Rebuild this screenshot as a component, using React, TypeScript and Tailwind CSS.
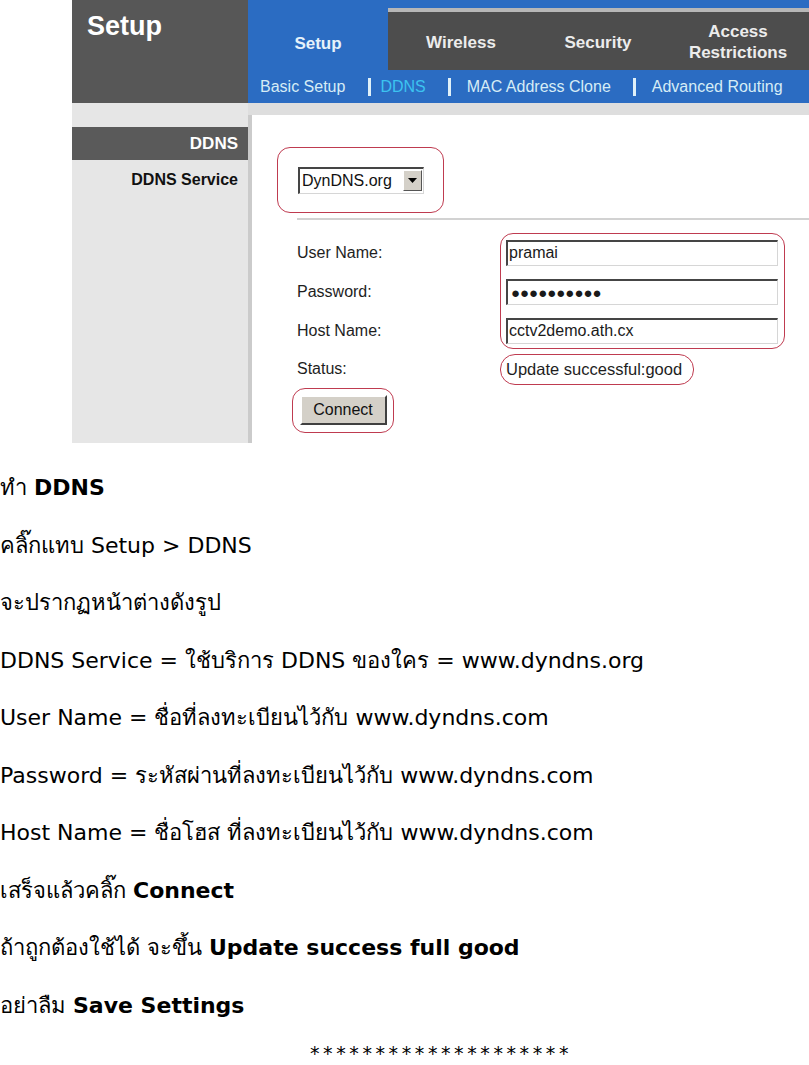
const arial = { fontFamily: '"Liberation Sans", Arial, sans-serif' };

function Outline({ className, children }: { className: string; children: React.ReactNode }) {
  return <div className={`border-[1.5px] border-[#bf3b50] ${className}`}>{children}</div>;
}

function Field({ value, dots }: { value: string; dots?: boolean }) {
  return (
    <div className="flex h-[26px] w-[272px] items-center border-t-2 border-l-2 border-t-[#454545] border-l-[#454545] border-b border-r border-b-[#d6d6d6] border-r-[#d6d6d6] bg-white pl-[1px] text-[16px] leading-none text-[#1a1a1a]">
      {dots ? <span className="pl-[2px] text-[15px]">{value}</span> : value}
    </div>
  );
}

function RouterShot() {
  return (
    <div className="ml-[72px] h-[443px] w-[737px] overflow-hidden" style={arial}>
      <div className="flex h-[103px]">
        <div className="w-[176px] bg-[#575757] pl-[15px] pt-[13px] text-[27px] font-bold leading-none text-white">Setup</div>
        <div className="flex flex-1 flex-col bg-[#2b6cc2]">
          <div className="flex h-[70px]">
            <div className="flex w-[140px] items-center justify-center pt-[18px] text-[17px] font-bold text-[#e6f2fa]">Setup</div>
            <div className="flex-1 pt-[8px]">
              <div className="flex h-full border-t-4 border-[#b7b7b7] bg-[#4d4d4d] pt-[2px] text-[17px] font-bold leading-[21px] text-[#ececec]">
                <div className="flex w-[140px] items-center justify-center pl-[6px]">Wireless</div>
                <div className="flex w-[140px] items-center justify-center">Security</div>
                <div className="flex w-[140px] items-center justify-center text-center">
                  Access
                  <br />
                  Restrictions
                </div>
              </div>
            </div>
          </div>
          <div className="flex h-[33px] items-center pl-[12px] text-[16px] text-[#d6ecf6]">
            <span>Basic Setup</span>
            <span className="ml-[23px] inline-block h-[18px] w-[3px] bg-[#dff0f8]" />
            <span className="ml-[9px] text-[#3cc3f0]">DDNS</span>
            <span className="ml-[22px] inline-block h-[18px] w-[3px] bg-[#dff0f8]" />
            <span className="ml-[16px]">MAC Address Clone</span>
            <span className="ml-[22px] inline-block h-[18px] w-[3px] bg-[#dff0f8]" />
            <span className="ml-[16px]">Advanced Routing</span>
          </div>
        </div>
      </div>

      <div className="flex h-[340px]">
        <div className="w-[176px] bg-[#e6e6e6] pt-[24px]">
          <div className="flex h-[33px] items-center justify-end bg-[#5a5a5a] pr-[10px] text-[17px] font-bold text-white">DDNS</div>
          <div className="mt-[10px] pr-[10px] text-right text-[16px] font-bold leading-[20px] text-[#111]">DDNS Service</div>
        </div>
        <div className="flex flex-1 flex-col bg-[#dedede] pt-[12px]">
          <div className="flex-1 border-l-4 border-[#cbcbcb] bg-white">
            <Outline className="ml-[25px] mt-[32px] flex h-[66px] w-[167px] items-center rounded-[13px] pl-[20px]">
              <div className="flex h-[27px] w-[126px] items-center border-t-2 border-l-2 border-t-[#454545] border-l-[#454545] border-b border-r border-[#d6d6d6] bg-white pl-[2px] text-[16px] leading-none text-[#111]">
                <span className="flex-1">DynDNS.org</span>
                <span className="mr-[1px] flex h-[21px] w-[19px] items-center justify-center border border-t-white border-l-white border-b-[#555] border-r-[#555] bg-[#d4d0c8]">
                  <svg width="9" height="5" viewBox="0 0 9 5">
                    <path d="M0 0h9L4.5 5z" fill="#000" />
                  </svg>
                </span>
              </div>
            </Outline>
            <div className="ml-[45px] mt-[5px] h-[2px] bg-[#d2d2d2]" />

            <div className="ml-[45px] mt-[13px] text-[16px] leading-none text-[#1e1e1e]">
              <div className="flex">
                <div className="flex w-[203px] flex-col gap-[13px] pt-[7px]">
                  <div className="flex h-[26px] items-center">User Name:</div>
                  <div className="flex h-[26px] items-center">Password:</div>
                  <div className="flex h-[26px] items-center">Host Name:</div>
                </div>
                <Outline className="flex w-[285px] flex-col gap-[13px] rounded-[13px] px-[5px] pb-[4px] pt-[5.5px]">
                  <Field value="pramai" />
                  <Field value="●●●●●●●●●●" dots />
                  <Field value="cctv2demo.ath.cx" />
                </Outline>
              </div>
              <div className="mt-[5px] flex">
                <div className="flex w-[203px] items-center">Status:</div>
                <Outline className="flex h-[31px] w-[194px] items-center rounded-[15px] px-[5px] text-[16.5px]">
                  Update successful:good
                </Outline>
              </div>
              <div className="-ml-[5px] mt-[3px] flex">
                <Outline className="flex h-[45px] w-[102px] items-center justify-center rounded-[13px]">
                  <div className="flex h-[30px] w-[87px] items-center justify-center border-2 border-t-white border-l-white border-b-[#404040] border-r-[#404040] bg-[#d4d0c8] text-[16px] text-[#111]">
                    Connect
                  </div>
                </Outline>
              </div>
            </div>
          </div>
        </div>
      </div>
    </div>
  );
}

const lines: { text: string; bold?: string }[] = [
  { text: 'ทำ ', bold: 'DDNS' },
  { text: 'คลิ๊กแทบ Setup > DDNS' },
  { text: 'จะปรากฏหน้าต่างดังรูป' },
  { text: 'DDNS Service = ใช้บริการ DDNS ของใคร = www.dyndns.org' },
  { text: 'User Name = ชื่อที่ลงทะเบียนไว้กับ www.dyndns.com' },
  { text: 'Password = ระหัสผ่านที่ลงทะเบียนไว้กับ www.dyndns.com' },
  { text: 'Host Name = ชื่อโฮส ที่ลงทะเบียนไว้กับ www.dyndns.com' },
  { text: 'เสร็จแล้วคลิ๊ก ', bold: 'Connect' },
  { text: 'ถ้าถูกต้องใช้ได้ จะขึ้น ', bold: 'Update success full good' },
  { text: 'อย่าลืม ', bold: 'Save Settings' },
];

export default function App() {
  return (
    <div className="h-[1065px] overflow-hidden bg-white text-black">
      <RouterShot />
      <div className="pt-[16px] text-[22px] leading-[57.5px]" style={{ fontFamily: 'Tahoma, "DejaVu Sans", sans-serif' }}>
        {lines.map((l, i) => (
          <p key={i} className="whitespace-nowrap">
            {l.text}
            {l.bold && <b className="font-bold">{l.bold}</b>}
          </p>
        ))}
        <p className="mt-[14px] pl-[310px] text-[19px] leading-[10px] tracking-[3.6px]">********************</p>
      </div>
    </div>
  );
}
